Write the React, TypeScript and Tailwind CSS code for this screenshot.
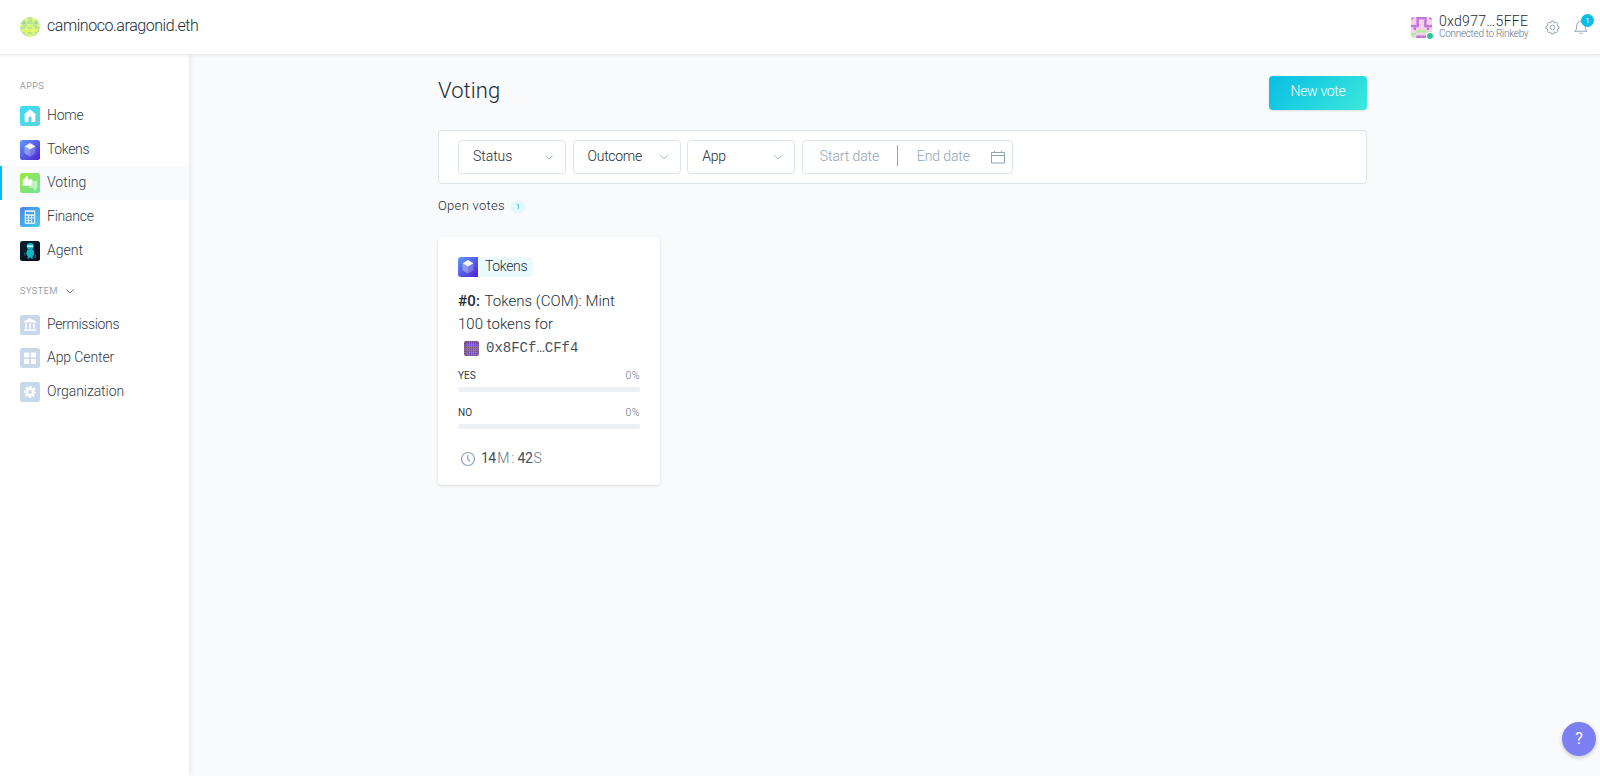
import React from "react";

type Kind = "home" | "tokens" | "voting" | "finance" | "agent" | "permissions" | "apps" | "org";

function AppIcon({ kind, id }: { kind: Kind; id: string }) {
  const fills: Record<Kind, [string, string]> = {
    home: ["#3ddcf5", "#5bd5dc"],
    tokens: ["#5c9bfa", "#5020d0"],
    voting: ["#9be83c", "#6fe3a0"],
    finance: ["#4a86ea", "#44cdea"],
    agent: ["#0b2330", "#060a18"],
    permissions: ["#c8d7ea", "#c8d7ea"],
    apps: ["#c8d7ea", "#c8d7ea"],
    org: ["#c8d7ea", "#c8d7ea"],
  };
  return (
    <svg viewBox="0 0 20 20" className="block size-5 shrink-0">
      <defs>
        <linearGradient id={id} x1="0" y1="0" x2="1" y2="1">
          <stop offset="0" stopColor={fills[kind][0]} />
          <stop offset="1" stopColor={fills[kind][1]} />
        </linearGradient>
      </defs>
      <rect width="20" height="20" rx={id === "tag" ? 0 : 2.5} fill={`url(#${id})`} />
      {kind === "home" && (
        <path d="M10 3.2 3.7 8.8h1v6.4a.8.8 0 0 0 .8.8h3v-4a1.5 1.5 0 0 1 3 0v4h3a.8.8 0 0 0 .8-.8V8.8h1z" fill="#fff" />
      )}
      {kind === "tokens" && (
        <g>
          <path d="M10 3 15.500 6.300 10 9.600 4.500 6.300z" fill="#fff" opacity=".92" />
          <path d="M4.500 6.300 10 9.600v7.200l-5.500-3.500z" fill="#fff" opacity=".35" />
          <path d="M15.500 6.300 10 9.600v7.200l5.500-3.500z" fill="#fff" opacity=".22" />
        </g>
      )}
      {kind === "voting" && (
        <g>
          <path d="M17.300 8v7.200h-1l-.7 2.500c-1.100 0-1.800-.8-1.600-1.900l.1-.6H10.500c-.9 0-1.400-.8-1.200-1.500L10.500 8.800c.2-.5.600-.8 1.200-.8z" fill="#fff" opacity=".5" />
          <path d="M2.800 12.700V7l1.700-1 2.300-3.200c1.100.1 1.600 1 1.400 2L7.900 6.200h3.300c.9 0 1.400.7 1.200 1.500l-1 4.100c-.2.600-.6.900-1.200.9z" fill="#fff" />
        </g>
      )}
      {kind === "finance" && (
        <g>
          <path d="M5.500 3.300h9a.8.8 0 0 1 .8.8v12a.8.8 0 0 1-.8.8h-9a.8.8 0 0 1-.8-.8v-12a.8.8 0 0 1 .8-.8z" fill="#fff" opacity=".8" />
          <path d="M6 5h8v2.300H6zM6 9h1.800v1.400H6zM9.100 9h1.800v1.400H9.100zM12.200 9H14v1.400h-1.800zM6 11.600h1.800V13H6zM9.100 11.600h1.800V13H9.100zM12.200 11.600H14v3.800h-1.800zM6 14.100h1.800v1.300H6zM9.100 14.100h1.800v1.300H9.100z" fill="#479fe9" />
        </g>
      )}
      {kind === "agent" && (
        <g fill="#12b5c4">
          <ellipse cx="10.200" cy="5.300" rx="3.500" ry="3.200" />
          <path d="M7.200 4.200h6v2h-6z" fill="#a5f5f5" />
          <path d="M8 8.300h4.600c1.200.8 1.700 2.600 1.500 4.500-.1 1.100-.8 2-1.500 2.700l.4 1.900h-2.200l-.6-1.300-1.200 1.300H7.200l.8-2c-1-.7-1.700-1.700-1.700-2.900C6.300 11 7 9.400 8 8.300z" />
          <path d="M4.300 11.500h1.100v3H4.300zM14.500 13.500h1.300V17h-1.300z" opacity=".6" />
        </g>
      )}
      {kind === "permissions" && (
        <path d="M10 3.300 3.800 6.200v1.300h12.400V6.200zM5.300 8.300h1.600v5.200H5.300zM9.200 8.300h1.600v5.200H9.200zM13.100 8.300h1.600v5.200h-1.600zM3.800 14.300h12.400v1.500H3.800z" fill="#fff" />
      )}
      {kind === "apps" && (
        <g fill="#fff">
          <rect x="4" y="4.500" width="5.200" height="5" rx=".6" />
          <rect x="10.800" y="4.500" width="5.200" height="5" rx=".6" />
          <rect x="4" y="11" width="5.200" height="5" rx=".6" />
          <rect x="10.800" y="11" width="5.200" height="5" rx=".6" />
        </g>
      )}
      {kind === "org" && (
        <g>
          <circle cx="10" cy="10" r="4.600" fill="#fff" />
          <circle cx="10" cy="10" r="5.200" fill="none" stroke="#fff" strokeWidth="1.800" strokeDasharray="2.300 1.784" strokeDashoffset="1.150" />
          <circle cx="10" cy="10" r="1.900" fill="#c8d7ea" />
        </g>
      )}
    </svg>
  );
}

function Pixels({ rows, colors, className }: { rows: string[]; colors: Record<string, string>; className: string }) {
  return (
    <svg viewBox={`0 0 ${rows[0].length} ${rows.length}`} className={className}>
      {rows.flatMap((r, y) =>
        r.split("").map((c, x) => <rect key={`${x}-${y}`} x={x} y={y} width="1.050" height="1.050" fill={colors[c]} />)
      )}
    </svg>
  );
}

function Chevron({ className }: { className: string }) {
  return (
    <svg viewBox="0 0 8 5" className={className} fill="none" stroke="currentColor" strokeWidth="1" strokeLinecap="round" strokeLinejoin="round">
      <path d="M.7.7 4 4 7.300.7" />
    </svg>
  );
}

function NavItem({ kind, label, track, active }: { kind: Kind; label: string; track: string; active?: boolean }) {
  return (
    <li className={`flex h-[33.700px] items-center pl-[20px] ${active ? "bg-[#f9fafc] shadow-[inset_2px_0_0_#08bee5]" : ""}`}>
      <AppIcon kind={kind} id={`nav-${kind}`} />
      <span className={`-mt-[2px] ml-[7px] text-[14px] leading-5 text-[#303a47] ${track}`}>{label}</span>
    </li>
  );
}

function Dropdown({ label, track }: { label: string; track: string }) {
  return (
    <button className="flex h-[34px] w-[108px] items-center justify-between rounded-[4px] border border-[#dde4e9] bg-white pr-[12px] pl-[14px]">
      <span className={`-mt-px text-[14px] text-[#212b36] ${track}`}>{label}</span>
      <Chevron className="mt-px h-[5px] w-2 text-[#a9b9c9]" />
    </button>
  );
}

function Gear() {
  const pts: string[] = [];
  for (let i = 0; i < 8; i++) {
    [[-16, 5.2], [-9, 6.6], [9, 6.6], [16, 5.2]].forEach(([a, r]) => {
      const t = ((i * 45 + a) * Math.PI) / 180;
      pts.push(`${(7.5 + r * Math.sin(t)).toFixed(2)},${(7.5 - r * Math.cos(t)).toFixed(2)}`);
    });
  }
  return (
    <svg viewBox="0 0 15 15" className="size-[15px] shrink-0" fill="none" stroke="#8fa4b5" strokeWidth="1" strokeLinejoin="round">
      <polygon points={pts.join(" ")} />
      <circle cx="7.500" cy="7.500" r="2.300" />
    </svg>
  );
}

function Result({ label }: { label: string }) {
  return (
    <div className="h-[37px]">
      <div className="flex h-[15px] items-center justify-between text-[10px] leading-[15px]">
        <span className="font-normal text-[#303a47]">{label}</span>
        <span className="text-[10.500px] tracking-[0.500px] text-[#637381]">0%</span>
      </div>
      <div className="mt-[4px] h-[5px] rounded-full bg-[#edf0f5]" />
    </div>
  );
}

export default function App() {
  return (
    <div className="relative flex h-[776px] w-[1600px] flex-col overflow-hidden bg-[#f9fafc] font-['Roboto','Liberation_Sans',sans-serif] font-light text-[#212b36]">
      <header className="z-10 flex h-[54px] shrink-0 items-center bg-white pl-5 shadow-[0_1px_3px_rgba(0,0,0,0.100)]">
        <Pixels
          className="size-5 rounded-full"
          colors={{ a: "#b9e28f", b: "#dcfb62", c: "#8fd990" }}
          rows={["abbaabba", "cabaabac", "acaaaaca", "baabbaab", "aabaabaa", "abbbbbba", "aabaabaa", "aaabbaaa"]}
        />
        <span className="-mt-[2px] ml-[7px] text-[16px] tracking-[-0.450px]">caminoco.aragonid.eth</span>
        <div className="ml-auto flex items-center pr-[11px]">
          <div className="relative mr-[7px]">
            <Pixels
              className="size-[21px] rounded-[3px]"
              colors={{ a: "#f5cfe6", b: "#bd74da", c: "#a9ec9b" }}
              rows={["babbbbab", "aabaabaa", "aabaabaa", "bbbaabbb", "abaaaaba", "aaccccaa", "ccaaaacc", "cabbbbac"]}
            />
            <span className="absolute -right-[1px] -bottom-[1px] size-[6px] rounded-full bg-[#2cc68f] ring-1 ring-white" />
          </div>
          <div className="mt-[-2px] mr-[17px] flex w-[89px] flex-col whitespace-nowrap">
            <span className="text-[14px] leading-[14px] tracking-[0.300px]">0xd977…5FFE</span>
            <span className="text-[10px] leading-[11px] tracking-[-0.300px] text-[#637381]">Connected to Rinkeby</span>
          </div>
          <Gear />
          <div className="relative ml-[13px]">
            <svg viewBox="0 0 16 16" className="size-4" fill="none" stroke="#8fa4b5" strokeWidth="1" strokeLinecap="round" strokeLinejoin="round">
              <path d="M2 12.200h12c-1.500-1-1.700-2.500-1.700-5.200C12.300 4.300 10.700 2.500 8 2.500S3.700 4.300 3.700 7c0 2.700-.2 4.200-1.700 5.200zM6.800 14.100c.5.800 1.900.8 2.400 0" />
            </svg>
            <span className="absolute -top-[5px] left-[8px] flex size-[13px] items-center justify-center rounded-full bg-[#08bee5] text-[8px] leading-none font-normal text-white">1</span>
          </div>
        </div>
      </header>
      <div className="flex flex-1">
        <aside className="w-[189px] shrink-0 bg-white shadow-[1px_0_4px_rgba(0,0,0,0.090)]">
          <h2 className="mt-[25px] ml-5 h-[20px] text-[9px] leading-[15px] tracking-[0.550px] text-[#637381]">APPS</h2>
          <ul>
            <NavItem kind="home" label="Home" track="tracking-[-0.200px]" />
            <NavItem kind="tokens" label="Tokens" track="tracking-[-0.350px]" />
            <NavItem kind="voting" label="Voting" track="tracking-[0]" active />
            <NavItem kind="finance" label="Finance" track="tracking-[-0.250px]" />
            <NavItem kind="agent" label="Agent" track="tracking-[0]" />
          </ul>
          <div className="mt-[17px] ml-5 flex h-[23.500px] items-start text-[9px] leading-[15px] tracking-[0.600px] text-[#637381]">
            SYSTEM
            <Chevron className="mt-[5px] ml-[8px] h-[5px] w-2" />
          </div>
          <ul>
            <NavItem kind="permissions" label="Permissions" track="tracking-[-0.350px]" />
            <NavItem kind="apps" label="App Center" track="tracking-[-0.100px]" />
            <NavItem kind="org" label="Organization" track="tracking-[-0.050px]" />
          </ul>
        </aside>
        <main className="ml-[249px] w-[929px]">
          <div className="mt-[22px] flex h-[53.500px] items-start justify-between">
            <h1 className="-mt-px text-[22px] leading-[32px] tracking-[0.100px]">Voting</h1>
            <button className="h-[33.500px] w-[98px] rounded-[4px] bg-linear-[135deg] from-[#08bee5] to-[#3ce8dc] pb-[3px] text-[14px] tracking-[-0.300px] text-white shadow-[0_1px_2px_rgba(0,0,0,0.120)]">New vote</button>
          </div>
          <div className="flex h-[54px] items-center gap-[6.600px] rounded-[4px] border border-[#dde4e9] bg-white pl-[19px]">
            <Dropdown label="Status" track="tracking-[-0.050px]" />
            <Dropdown label="Outcome" track="tracking-[-0.300px]" />
            <Dropdown label="App" track="tracking-[-0.200px]" />
            <div className="flex h-[34px] w-[211px] items-center rounded-[4px] border border-[#dde4e9] text-[14px] text-[#8fa4b5]">
              <span className="-mt-px ml-[17px] w-[77px] tracking-[-0.100px]">Start date</span>
              <span className="-mt-[3px] h-[21px] w-px bg-[#8fa4b5]" />
              <span className="-mt-px ml-[19px] w-[74px] tracking-[-0.100px]">End date</span>
              <svg viewBox="0 0 14 14" className="size-[14px]" fill="none" stroke="#8fa4b5" strokeWidth="1">
                <path d="M.5 2.500h13v10.500H.5zM.5 5.500h13M3.500 1v2M10.500 1v2" />
              </svg>
            </div>
          </div>
          <div className="mt-[12px] flex h-5 items-center text-[13px] tracking-[0.300px]">
            Open votes
            <span className="mt-[2px] ml-[6px] flex size-[14px] items-center justify-center rounded-full bg-[#e3f8fb] text-[8px] leading-none font-normal tracking-normal text-[#2bb5cf]">1</span>
          </div>
          <article className="mt-[21.500px] h-[247.500px] w-[222px] rounded-[4px] bg-white px-5 pt-5 shadow-[0_1px_3px_rgba(0,0,0,0.130)]">
            <div className="flex h-5 w-[75px] items-center overflow-hidden rounded-[3px] bg-[#ebfbfd]">
              <AppIcon kind="tokens" id="tag" />
              <span className="-mt-[2px] ml-[7px] text-[14px] tracking-[-0.350px]">Tokens</span>
            </div>
            <p className="mt-[13px] text-[15px] leading-[22.500px] tracking-[0.030px] whitespace-nowrap">
              <b className="mr-[1px] font-medium tracking-[0.200px]">#0:</b> Tokens (COM): Mint
              <br />
              100 tokens for
            </p>
            <div className="mt-[2px] ml-[6px] flex h-[22px] items-center">
              <Pixels
                className="size-[15px] rounded-[2px]"
                colors={{ a: "#70498f", b: "#785270", c: "#744be0" }}
                rows={["baaaaaab", "abccccba", "accccccc", "bbbbbbbb", "bcbaabcb", "bbcbbcbb", "bcbccbcb", "abcbbcba"]}
              />
              <span className="ml-[7px] font-['Liberation_Mono',monospace] text-[14px] text-[#46505c]">0x8FCf…CFf4</span>
            </div>
            <div className="mt-[9px]">
              <Result label="YES" />
              <Result label="NO" />
            </div>
            <div className="mt-[7px] ml-[2px] flex h-5 items-center text-[14px] whitespace-pre">
              <svg viewBox="0 0 16 16" className="size-4" fill="none" stroke="#8fa4b5" strokeWidth="1.200" strokeLinecap="round">
                <circle cx="8" cy="8" r="6.500" />
                <path d="M7.800 4.300V8l1.700 2" />
              </svg>
              <span className="-mt-px ml-[5px] flex text-[#637381]">
                <b className="font-normal tracking-[-0.700px] text-[#46505c]">14</b>
                <span className="ml-[2px] tracking-[-1px]">M</span>
                <span className="ml-[3px]">:</span>
                <b className="ml-[3px] font-normal tracking-[-0.300px] text-[#46505c]">42</b>
                <span className="ml-px">S</span>
              </span>
            </div>
          </article>
        </main>
      </div>
      <button className="absolute top-[722px] left-[1562px] size-[34px] rounded-full bg-[#7c80f2] text-[16px] font-normal text-white shadow-[0_2px_4px_rgba(0,0,0,0.180)]">?</button>
    </div>
  );
}
